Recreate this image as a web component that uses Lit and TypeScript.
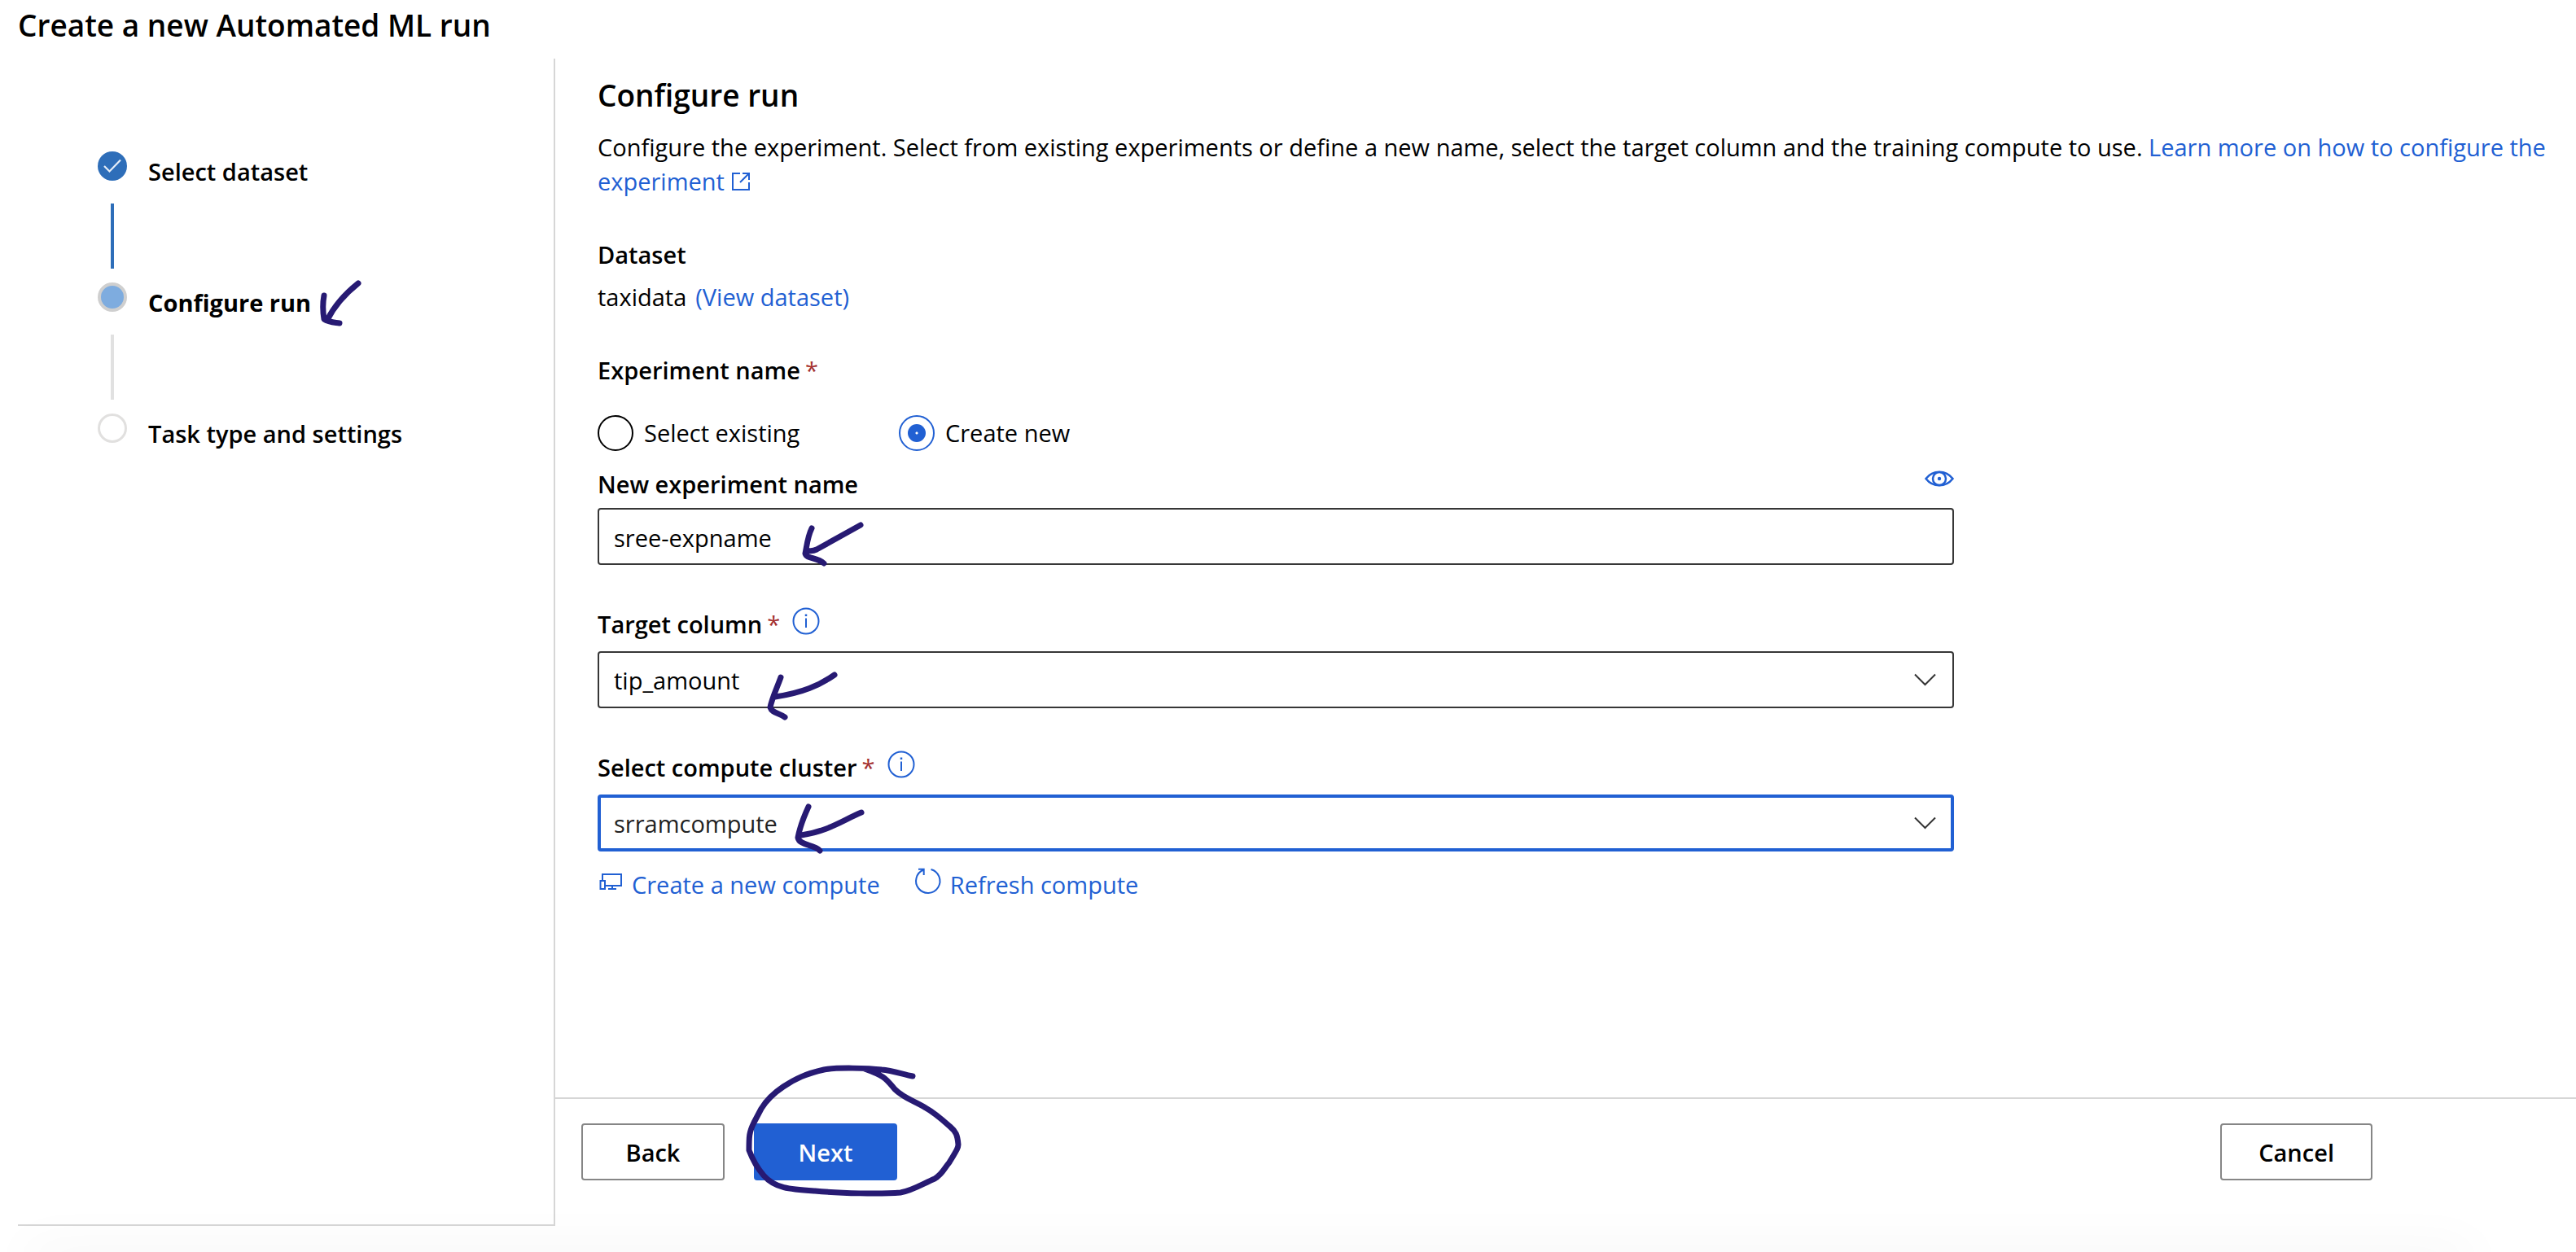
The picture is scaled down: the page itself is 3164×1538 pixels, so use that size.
import { LitElement, html, css, svg } from "lit";
import { customElement, state } from "lit/decorators.js";

const INK = "#271a73";

@customElement("app-root")
class AppRoot extends LitElement {
  static styles = css`
    :host {
      --blue: #2160d3;
      --line: #d6d6d6;
      display: flex;
      flex-direction: column;
      box-sizing: border-box;
      min-height: 100vh;
      padding-bottom: 32px;
      position: relative;
      overflow: hidden;
      background: #fff;
      color: #000;
      font-family: "Open Sans", "Noto Sans", sans-serif;
      font-size: 29px;
      line-height: 42px;
    }
    :host::after {
      content: "";
      position: absolute;
      top: 100%;
      left: 32px;
      right: 128px;
      height: 20px;
      box-shadow: 0 0 64px rgba(0, 0, 0, 0.07);
      pointer-events: none;
    }
    * {
      box-sizing: border-box;
    }
    h1,
    h2,
    h3,
    p,
    ol,
    fieldset {
      margin: 0;
      padding: 0;
      border: 0;
    }
    svg {
      display: block;
      flex: none;
      overflow: visible;
    }
    a {
      color: var(--blue);
      text-decoration: none;
    }
    h1,
    h2 {
      font-size: 37px;
      line-height: 50px;
      font-weight: 600;
    }
    h1 {
      padding: 6px 22px 16px;
    }
    h3,
    .label {
      font-size: 29px;
      font-weight: 600;
    }
    .layout {
      flex: 1;
      display: grid;
      grid-template-columns: 660px minmax(0, 1fr);
      margin-left: 22px;
    }
    .side {
      border-right: 2px solid var(--line);
      border-bottom: 2px solid var(--line);
      padding: 114px 24px 24px 98px;
    }
    .steps {
      list-style: none;
    }
    .step {
      display: grid;
      grid-template-columns: 36px max-content;
      column-gap: 26px;
      align-items: start;
      font-weight: 600;
    }
    .step.current {
      font-weight: 700;
    }
    .rail {
      display: flex;
      flex-direction: column;
      align-items: center;
    }
    .dot {
      width: 36px;
      height: 36px;
      border-radius: 50%;
      display: grid;
      place-items: center;
    }
    .done .dot {
      background: #2e6eb9;
    }
    .current .dot {
      background: #7eacdf;
      border: 4px solid #cfcfcf;
    }
    .todo .dot {
      border: 3px solid #e1e0df;
    }
    .bar {
      width: 4px;
      height: 80px;
      margin: 28px 0 17px;
      background: #e1e1e1;
    }
    .done .bar {
      background: #2e6eb9;
    }
    .step-name {
      padding-top: 4px;
      position: relative;
    }
    .ink {
      position: absolute;
      fill: none;
      stroke-width: 7px;
      stroke-linecap: round;
      stroke-linejoin: round;
      pointer-events: none;
    }
    .main {
      display: flex;
      flex-direction: column;
    }
    .content {
      flex: 1;
      padding: 20px 24px 20px 52px;
    }
    .intro {
      margin: 18px 0 48px;
    }
    .intro svg {
      display: inline-block;
      margin-left: 2px;
    }
    .dataset {
      display: flex;
      gap: 11px;
      margin: 10px 0 48px;
    }
    .form {
      padding-right: 26px;
    }
    .star {
      color: #a4302f;
      font-weight: 400;
      margin-left: 6px;
    }
    .radios {
      display: flex;
      margin: 34px 0 20px;
    }
    .choice {
      display: flex;
      align-items: center;
      gap: 13px;
      min-width: 370px;
    }
    .radio {
      appearance: none;
      width: 44px;
      height: 44px;
      margin: 0;
      border: 2px solid #000;
      border-radius: 50%;
      display: grid;
      place-items: center;
    }
    .radio:checked {
      border-color: var(--blue);
    }
    .radio:checked::before {
      content: "";
      width: 22px;
      height: 22px;
      border-radius: 50%;
      background: radial-gradient(circle, #fff 1px, var(--blue) 2px);
    }
    .fields {
      width: 70%;
      display: flex;
      flex-direction: column;
      gap: 52px;
    }
    .label-row {
      display: flex;
      align-items: flex-start;
      padding-bottom: 12px;
    }
    .label-row.tight {
      justify-content: space-between;
      padding-bottom: 8px;
    }
    .icon-button {
      border: 0;
      padding: 0;
      background: none;
      color: var(--blue);
    }
    .info {
      margin-left: 15px;
    }
    .box {
      position: relative;
    }
    .control {
      display: block;
      width: 100%;
      height: 70px;
      margin: 0;
      padding: 2px 80px 0 18px;
      border: 2px solid #373737;
      border-radius: 4px;
      outline: 0;
      appearance: none;
      background: #fff;
      color: #000;
      font: inherit;
    }
    .control.active {
      border: 4px solid var(--blue);
      padding: 2px 78px 0 16px;
      color: #222;
    }
    .chevron {
      position: absolute;
      right: 22px;
      top: 27px;
      pointer-events: none;
    }
    .links {
      display: flex;
      gap: 42px;
      padding-top: 20px;
    }
    .link {
      display: flex;
      gap: 12px;
    }
    .monitor {
      margin: 6px 0 0 2px;
    }
    .footer {
      display: flex;
      gap: 36px;
      border-top: 2px solid var(--line);
      padding: 30px 250px 56px 32px;
    }
    .button {
      height: 70px;
      min-width: 176px;
      padding: 2px 45px 0;
      border: 2px solid #868686;
      border-radius: 4px;
      background: #fff;
      color: #000;
      font: inherit;
      font-weight: 600;
    }
    .primary {
      border-color: var(--blue);
      background: var(--blue);
      color: #fff;
    }
    .cancel {
      margin-left: auto;
    }
    .next-wrap {
      position: relative;
    }
  `;

  @state() private mode = "new";

  private steps = [
    { name: "Select dataset", state: "done" },
    { name: "Configure run", state: "current" },
    { name: "Task type and settings", state: "todo" },
  ];

  /** Freehand mark placed over its parent; left/top are relative to that parent. */
  private ink(left: number, top: number, d: string) {
    return html`<svg class="ink" style="left:${left}px;top:${top}px" width="10" height="10" stroke=${INK} aria-hidden="true">${svg`<path d=${d} />`}</svg>`;
  }

  private info(name: string) {
    return html`<button class="icon-button info" type="button" aria-label=${name}>
      <svg width="34" height="34" viewBox="0 0 34 34" fill="none" stroke="currentColor" stroke-width="2">
        <circle cx="17" cy="17" r="15.5" />
        <path d="M17 13.500V25" />
        <path d="M17 8.500V11" stroke-width="2.500" />
      </svg>
    </button>`;
  }

  private chevron() {
    return html`<svg class="chevron" width="27" height="15" viewBox="0 0 27 15" fill="none" stroke="#333" stroke-width="2">
      <path d="M1 1.500L13.500 14L26 1.500" />
    </svg>`;
  }

  render() {
    return html`
      <h1>Create a new Automated ML run</h1>
      <div class="layout">
        <nav class="side" aria-label="Steps">
          <ol class="steps">
            ${this.steps.map(
              (s, i) => html`<li class="step ${s.state}">
                <div class="rail">
                  <span class="dot">
                    ${s.state === "done"
                      ? html`<svg width="22" height="17" viewBox="0 0 22 17" fill="none" stroke="#e6eef8" stroke-width="2.200">
                          <path d="M1 8L7.500 14.500L21 0.500" />
                        </svg>`
                      : ""}
                  </span>
                  ${i < this.steps.length - 1 ? html`<span class="bar"></span>` : ""}
                </div>
                <span class="step-name">
                  ${s.name}
                  ${s.state === "current"
                    ? this.ink(211, -1, "M47 2C32 14 17 31 9 47M5 17C3 28 4 40 5 46C11 50 18 50 24 51")
                    : ""}
                </span>
              </li>`
            )}
          </ol>
        </nav>
        <main class="main">
          <div class="content">
            <h2>Configure run</h2>
            <p class="intro">
              Configure the experiment. Select from existing experiments or define a new name, select the target
              column and the training compute to use.
              <a href="#learn">Learn more on how to configure the experiment
                <svg width="22" height="22" viewBox="0 0 22 22" fill="none" stroke="currentColor" stroke-width="2">
                  <path d="M10 1H1V21H21V12M13 1H21V9M21 1L10 12" />
                </svg></a>
            </p>
            <form class="form" @submit=${(e: Event) => e.preventDefault()}>
              <h3>Dataset</h3>
              <p class="dataset"><span>taxidata</span><a href="#dataset">(View dataset)</a></p>
              <h3 id="exp">Experiment name<span class="star">*</span></h3>
              <fieldset class="radios" aria-labelledby="exp">
                <label class="choice">
                  <input class="radio" type="radio" name="mode" .checked=${this.mode === "existing"}
                    @change=${() => (this.mode = "existing")} />
                  Select existing
                </label>
                <label class="choice">
                  <input class="radio" type="radio" name="mode" .checked=${this.mode === "new"}
                    @change=${() => (this.mode = "new")} />
                  Create new
                </label>
              </fieldset>
              <div class="fields">
                <div>
                  <div class="label-row tight">
                    <label class="label" for="name">New experiment name</label>
                    <button class="icon-button" type="button" aria-label="Preview">
                      <svg width="36" height="28" viewBox="0 0 36 28" fill="none" stroke="currentColor" stroke-width="2.500">
                        <path d="M1.500 14C10 3 26 3 34.500 14C26 25 10 25 1.500 14Z" />
                        <circle cx="18" cy="14" r="8" />
                        <circle cx="18" cy="14" r="2.200" fill="currentColor" stroke="none" />
                      </svg>
                    </button>
                  </div>
                  <div class="box">
                    <input class="control" id="name" type="text" value="sree-expname" />
                    ${this.ink(246, 14, "M77 7L23 37C19 39 14 39 10 38M17 11C12 21 11 32 9 42C11 49 23 46 32 54")}
                  </div>
                </div>
                <div>
                  <div class="label-row">
                    <label class="label" for="target">Target column<span class="star">*</span></label>
                    ${this.info("About target column")}
                  </div>
                  <div class="box">
                    <select class="control" id="target">
                      <option>tip_amount</option>
                    </select>
                    ${this.chevron()}
                    ${this.ink(204, 24, "M87 5C68 18 48 27 14 32M21 8C16 22 10 34 8 45C10 52 20 52 26 57")}
                  </div>
                </div>
                <div>
                  <div class="label-row">
                    <label class="label" for="cluster">Select compute cluster<span class="star">*</span></label>
                    ${this.info("About compute cluster")}
                  </div>
                  <div class="box">
                    <select class="control active" id="cluster">
                      <option>srramcompute</option>
                    </select>
                    ${this.chevron()}
                    ${this.ink(236, 10, "M88 12C66 21 48 35 14 40M23 5C17 18 12 32 10 43C12 53 30 51 37 59")}
                  </div>
                  <div class="links">
                    <a class="link" href="#create">
                      <svg class="monitor" width="28" height="22" viewBox="0 0 28 22" fill="none" stroke="currentColor" stroke-width="2">
                        <path d="M4 9V2H27V16H8M1.500 10H7V20H1.500ZM11 20H21M16 16V20" />
                      </svg>
                      Create a new compute
                    </a>
                    <a class="link" href="#refresh">
                      <svg width="32" height="32" viewBox="0 0 32 32" fill="none" stroke="currentColor" stroke-width="2">
                        <path d="M20.500 2A14.700 14.700 0 1 1 11.500 2.500M5 1.700H11.700V9" />
                      </svg>
                      Refresh compute
                    </a>
                  </div>
                </div>
              </div>
            </form>
          </div>
          <footer class="footer">
            <button class="button" type="button">Back</button>
            <div class="next-wrap">
              <button class="button primary" type="button">Next</button>
              ${this.ink(
                -14,
                -76,
                "M209 18C195 15 183 11 171 10C155 8 115 7 100 10C78 15 65 21 50 31C38 39 29 48 23 58L14 75C8 87 8 92 8 109C13 122 19 132 26 140C40 156 58 157 89 159C120 162 170 163 194 161C208 159 222 150 236 144C246 138 247 132 254 124C263 109 265 106 265 102C264 90 262 86 255 80C246 72 236 63 225 57C210 48 198 45 187 34C176 21 175 18 150 9"
              )}
            </div>
            <button class="button cancel" type="button">Cancel</button>
          </footer>
        </main>
      </div>
    `;
  }
}
